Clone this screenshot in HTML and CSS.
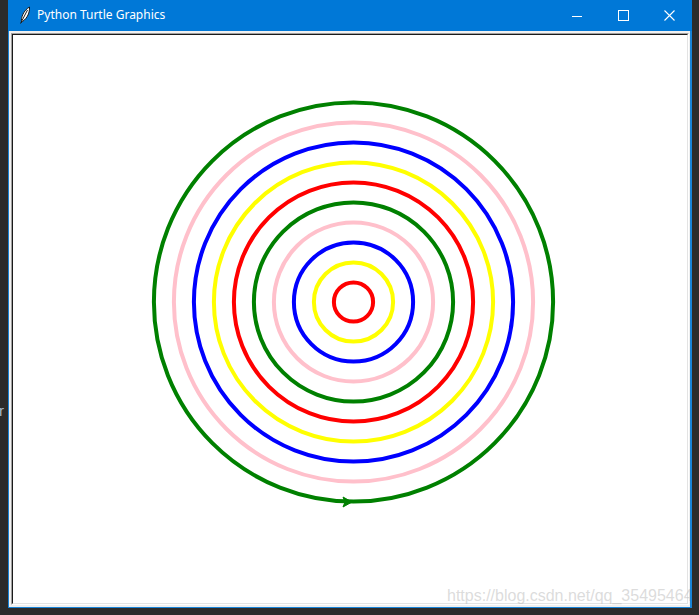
FILE: index.html
```html
<!DOCTYPE html>
<html>
<head>
<meta charset="utf-8">
<title>Python Turtle Graphics</title>
<link rel="stylesheet" href="styles.css">
</head>
<body>
<div class="stray">r</div>
<div class="window">
  <div class="titlebar">
    <svg class="feather" width="12" height="18" viewBox="0 0 12 18">
      <path d="M2.5 16.5 C1.8 11.5 4.5 4.5 10.5 1 C10.8 6.5 8.5 12 3.5 15.5 Z" fill="#ffffff" stroke="#1a1a1a" stroke-width="1"/>
      <path d="M1.5 17.5 L8.5 4" stroke="#1a1a1a" stroke-width="1" fill="none"/>
    </svg>
    <span class="title">Python Turtle Graphics</span>
    <div class="controls">
      <div class="ctrl"><svg width="10" height="10" viewBox="0 0 10 10"><path d="M0 5.5 H10" stroke="#fff" stroke-width="1"/></svg></div>
      <div class="ctrl"><svg width="11" height="11" viewBox="0 0 11 11"><rect x="0.5" y="0.5" width="10" height="10" fill="none" stroke="#fff" stroke-width="1"/></svg></div>
      <div class="ctrl"><svg width="11" height="11" viewBox="0 0 11 11"><path d="M0.5 0.5 L10.5 10.5 M10.5 0.5 L0.5 10.5" stroke="#fff" stroke-width="1.1"/></svg></div>
    </div>
  </div>
  <div class="client">
    <div class="canvas-outer">
      <div class="canvas-inner">
        <svg class="drawing" width="674" height="568" viewBox="13 35 674 568">
          <g fill="none" stroke-width="4">
            <circle cx="353.5" cy="302" r="19.6" stroke="#ff0000"/>
            <circle cx="353.5" cy="302" r="39.6" stroke="#ffff00"/>
            <circle cx="353.5" cy="302" r="59.6" stroke="#0000ff"/>
            <circle cx="353.5" cy="302" r="79.6" stroke="#ffc0cb"/>
            <circle cx="353.5" cy="302" r="99.6" stroke="#008000"/>
            <circle cx="353.5" cy="302" r="119.6" stroke="#ff0000"/>
            <circle cx="353.5" cy="302" r="139.6" stroke="#ffff00"/>
            <circle cx="353.5" cy="302" r="159.6" stroke="#0000ff"/>
            <circle cx="353.5" cy="302" r="179.6" stroke="#ffc0cb"/>
            <circle cx="353.5" cy="302" r="199.6" stroke="#008000"/>
          </g>
          <polygon points="352,502 343,497 345,502 343,507" fill="#008000" stroke="#008000" stroke-width="1"/>
        </svg>
      </div>
    </div>
    <div class="watermark">https://blog.csdn.net/qq_35495464</div>
  </div>
</div>
</body>
</html>
```

FILE: styles.css
```css
html, body {
  margin: 0;
  padding: 0;
}
body {
  width: 699px;
  height: 615px;
  overflow: hidden;
  background: #2b2b2b;
  position: relative;
  font-family: "Noto Sans", "Liberation Sans", sans-serif;
}
.stray {
  position: absolute;
  left: -1px;
  top: 402px;
  font-family: "Liberation Sans", sans-serif;
  font-size: 15px;
  color: #a9bcd0;
}
.window {
  margin-left: 8px;
  width: 684px;
  height: 608px;
  display: flex;
  flex-direction: column;
}
.titlebar {
  height: 31px;
  flex: none;
  background: #0078d7;
  display: flex;
  align-items: center;
  color: #ffffff;
}
.feather {
  display: block;
  margin-left: 11px;
  margin-top: -1px;
}
.title {
  margin-left: 6px;
  font-size: 12px;
  line-height: 16px;
  margin-top: -1px;
}
.controls {
  margin-left: auto;
  display: flex;
  height: 31px;
}
.ctrl {
  width: 46px;
  height: 31px;
  display: flex;
  align-items: center;
  justify-content: center;
}
.ctrl svg {
  display: block;
}
.client {
  flex: 1;
  position: relative;
  overflow: hidden;
  background: #f0f0f0;
  border-left: 1px solid #1883d7;
  border-right: 2px solid #1883d7;
  border-bottom: 1px solid #1883d7;
  padding: 2px 1px 2px 2px;
  display: flex;
}
.canvas-outer {
  flex: 1;
  display: flex;
  border: 1px solid;
  border-color: #a0a0a0 #ffffff #ffffff #a0a0a0;
}
.canvas-inner {
  flex: 1;
  display: flex;
  border: 1px solid;
  border-color: #1a1a1a #e3e3e3 #e3e3e3 #1a1a1a;
  background: #ffffff;
}
.drawing {
  display: block;
}
.watermark {
  position: absolute;
  left: 438px;
  top: 556px;
  font-family: "Liberation Sans", sans-serif;
  font-size: 16px;
  line-height: 18px;
  color: rgba(190, 190, 190, 0.55);
  white-space: nowrap;
}
```
